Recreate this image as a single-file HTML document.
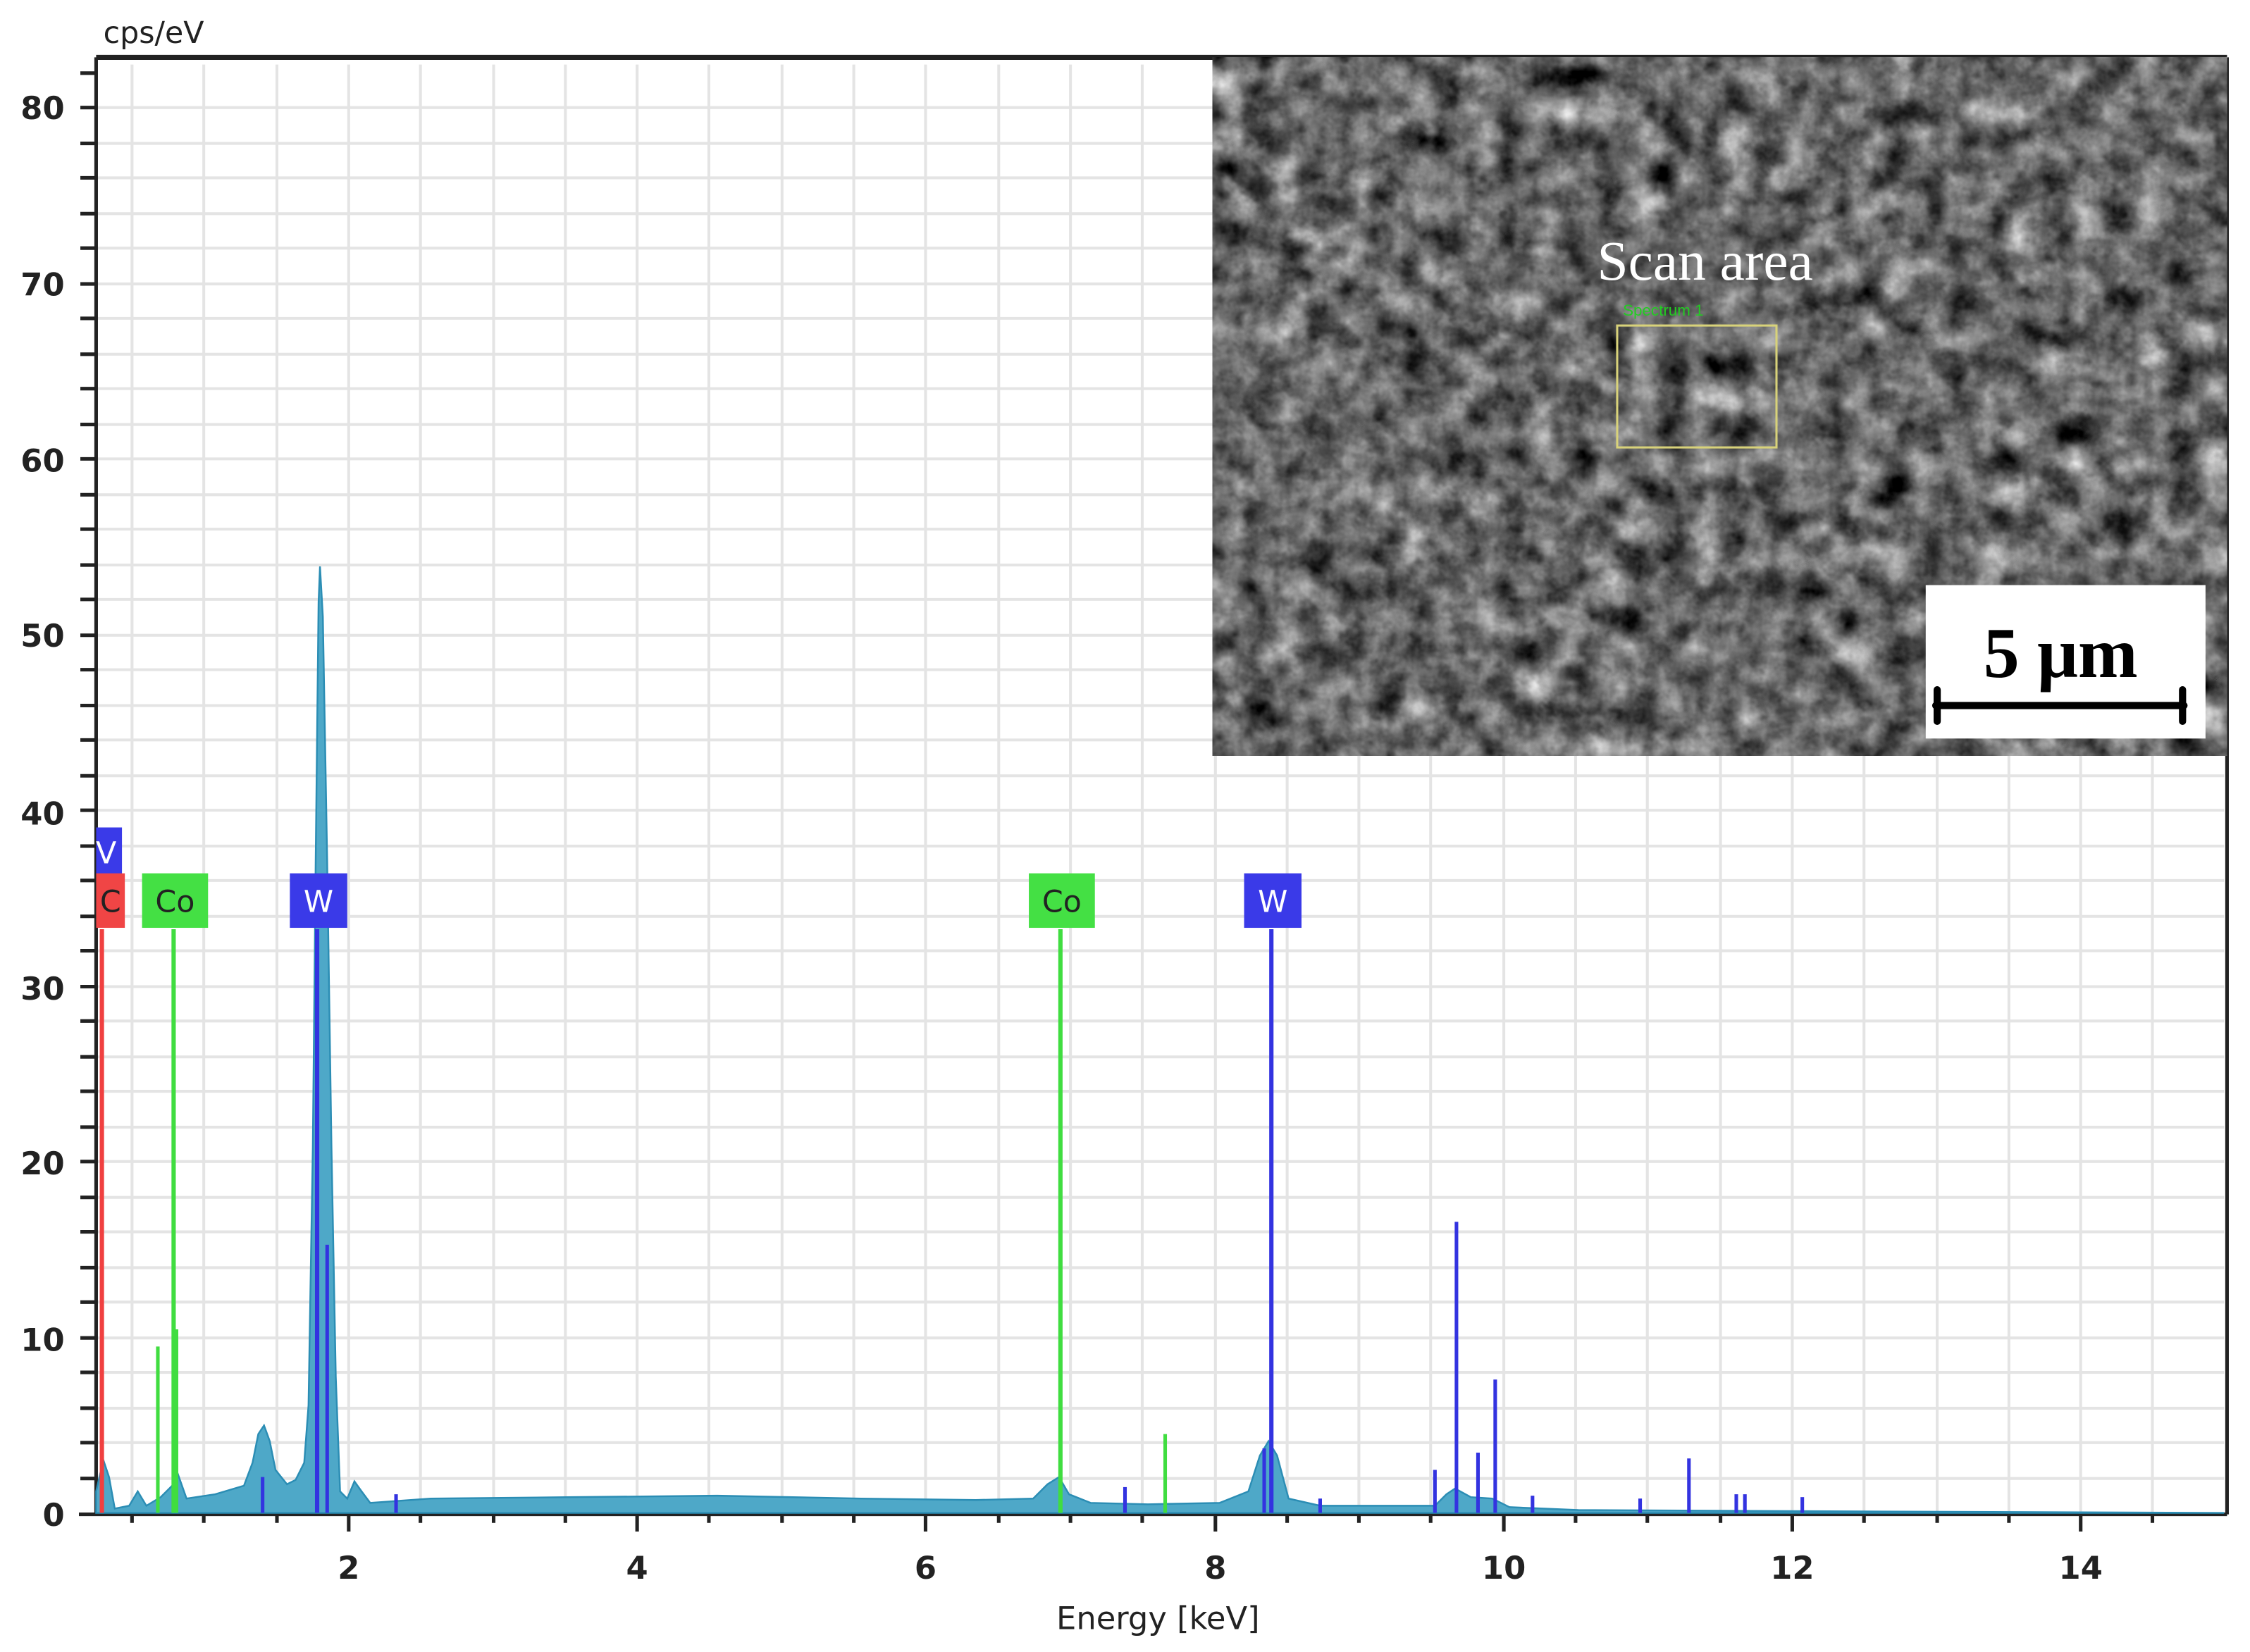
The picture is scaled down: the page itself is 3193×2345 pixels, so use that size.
<!DOCTYPE html>
<html><head><meta charset="utf-8"><style>
html,body{margin:0;padding:0;background:#fff;}
svg{display:block;}
</style></head><body>
<svg width="3193" height="2345" viewBox="0 0 1568 1152" preserveAspectRatio="none" xmlns="http://www.w3.org/2000/svg">
<defs>
<filter id="sem" x="0" y="0" width="100%" height="100%" color-interpolation-filters="sRGB">
<feTurbulence type="fractalNoise" baseFrequency="0.045" numOctaves="4" seed="3" result="n"/>
<feColorMatrix type="matrix" values="0.33 0.33 0.33 0 0  0.33 0.33 0.33 0 0  0.33 0.33 0.33 0 0  0 0 0 0 1" in="n" result="g"/>
<feComponentTransfer in="g"><feFuncR type="linear" slope="1.7" intercept="-0.44"/><feFuncG type="linear" slope="1.7" intercept="-0.44"/><feFuncB type="linear" slope="1.7" intercept="-0.44"/></feComponentTransfer>
</filter>
</defs>
<rect width="1568" height="1152" fill="#fff"/>
<!-- grid -->
<g stroke="#e4e4e4" stroke-width="2">
<line x1="67" y1="75" x2="1550" y2="75"/><line x1="67" y1="100" x2="1550" y2="100"/><line x1="67" y1="124" x2="1550" y2="124"/><line x1="67" y1="149" x2="1550" y2="149"/><line x1="67" y1="173" x2="1550" y2="173"/><line x1="67" y1="198" x2="1550" y2="198"/><line x1="67" y1="222" x2="1550" y2="222"/><line x1="67" y1="247" x2="1550" y2="247"/><line x1="67" y1="271" x2="1550" y2="271"/><line x1="67" y1="296" x2="1550" y2="296"/><line x1="67" y1="320" x2="1550" y2="320"/><line x1="67" y1="345" x2="1550" y2="345"/><line x1="67" y1="369" x2="1550" y2="369"/><line x1="67" y1="394" x2="1550" y2="394"/><line x1="67" y1="418" x2="1550" y2="418"/><line x1="67" y1="443" x2="1550" y2="443"/><line x1="67" y1="467" x2="1550" y2="467"/><line x1="67" y1="492" x2="1550" y2="492"/><line x1="67" y1="516" x2="1550" y2="516"/><line x1="67" y1="541" x2="1550" y2="541"/><line x1="67" y1="565" x2="1550" y2="565"/><line x1="67" y1="590" x2="1550" y2="590"/><line x1="67" y1="614" x2="1550" y2="614"/><line x1="67" y1="639" x2="1550" y2="639"/><line x1="67" y1="663" x2="1550" y2="663"/><line x1="67" y1="688" x2="1550" y2="688"/><line x1="67" y1="712" x2="1550" y2="712"/><line x1="67" y1="737" x2="1550" y2="737"/><line x1="67" y1="761" x2="1550" y2="761"/><line x1="67" y1="786" x2="1550" y2="786"/><line x1="67" y1="810" x2="1550" y2="810"/><line x1="67" y1="835" x2="1550" y2="835"/><line x1="67" y1="859" x2="1550" y2="859"/><line x1="67" y1="884" x2="1550" y2="884"/><line x1="67" y1="908" x2="1550" y2="908"/><line x1="67" y1="933" x2="1550" y2="933"/><line x1="67" y1="957" x2="1550" y2="957"/><line x1="67" y1="982" x2="1550" y2="982"/><line x1="67" y1="1006" x2="1550" y2="1006"/><line x1="67" y1="1031" x2="1550" y2="1031"/>
<line x1="92" y1="45" x2="92" y2="1055"/><line x1="142" y1="45" x2="142" y2="1055"/><line x1="193" y1="45" x2="193" y2="1055"/><line x1="243" y1="45" x2="243" y2="1055"/><line x1="293" y1="45" x2="293" y2="1055"/><line x1="344" y1="45" x2="344" y2="1055"/><line x1="394" y1="45" x2="394" y2="1055"/><line x1="444" y1="45" x2="444" y2="1055"/><line x1="494" y1="45" x2="494" y2="1055"/><line x1="545" y1="45" x2="545" y2="1055"/><line x1="595" y1="45" x2="595" y2="1055"/><line x1="645" y1="45" x2="645" y2="1055"/><line x1="696" y1="45" x2="696" y2="1055"/><line x1="746" y1="45" x2="746" y2="1055"/><line x1="796" y1="45" x2="796" y2="1055"/><line x1="847" y1="45" x2="847" y2="1055"/><line x1="897" y1="45" x2="897" y2="1055"/><line x1="947" y1="45" x2="947" y2="1055"/><line x1="997" y1="45" x2="997" y2="1055"/><line x1="1048" y1="45" x2="1048" y2="1055"/><line x1="1098" y1="45" x2="1098" y2="1055"/><line x1="1148" y1="45" x2="1148" y2="1055"/><line x1="1199" y1="45" x2="1199" y2="1055"/><line x1="1249" y1="45" x2="1249" y2="1055"/><line x1="1299" y1="45" x2="1299" y2="1055"/><line x1="1350" y1="45" x2="1350" y2="1055"/><line x1="1400" y1="45" x2="1400" y2="1055"/><line x1="1450" y1="45" x2="1450" y2="1055"/><line x1="1500" y1="45" x2="1500" y2="1055"/>
</g>
<!-- axes -->
<g stroke="#222" stroke-width="2.5">
<line x1="67" y1="40" x2="1552" y2="40" stroke-width="3.5"/>
<line x1="67" y1="40" x2="67" y2="1056"/>
<line x1="1552" y1="40" x2="1552" y2="1056"/>
<line x1="55" y1="1056" x2="1552" y2="1056"/>
</g>
<g stroke="#222" stroke-width="2.5">
<path d="M56 51h11M56 75h11M56 100h11M56 124h11M56 149h11M56 173h11M56 198h11M56 222h11M56 247h11M56 271h11M56 296h11M56 320h11M56 345h11M56 369h11M56 394h11M56 418h11M56 443h11M56 467h11M56 492h11M56 516h11M56 541h11M56 565h11M56 590h11M56 614h11M56 639h11M56 663h11M56 688h11M56 712h11M56 737h11M56 761h11M56 786h11M56 810h11M56 835h11M56 859h11M56 884h11M56 908h11M56 933h11M56 957h11M56 982h11M56 1006h11M56 1031h11"/>
<path d="M92 1056v6M142 1056v6M193 1056v6M243 1056v12M293 1056v6M344 1056v6M394 1056v6M444 1056v12M494 1056v6M545 1056v6M595 1056v6M645 1056v12M696 1056v6M746 1056v6M796 1056v6M847 1056v12M897 1056v6M947 1056v6M997 1056v6M1048 1056v12M1098 1056v6M1148 1056v6M1199 1056v6M1249 1056v12M1299 1056v6M1350 1056v6M1400 1056v6M1450 1056v12M1500 1056v6"/>
</g>
<g font-family="'DejaVu Sans','Liberation Sans',sans-serif" font-size="22" font-weight="bold" fill="#222" text-anchor="end">
<text x="45" y="83">80</text><text x="45" y="206">70</text><text x="45" y="329">60</text><text x="45" y="451">50</text><text x="45" y="575">40</text><text x="45" y="697">30</text><text x="45" y="819">20</text><text x="45" y="942">10</text><text x="45" y="1064">0</text>
</g>
<g font-family="'DejaVu Sans','Liberation Sans',sans-serif" font-size="22" font-weight="bold" fill="#222" text-anchor="middle">
<text x="243" y="1101">2</text><text x="444" y="1101">4</text><text x="645" y="1101">6</text><text x="847" y="1101">8</text><text x="1048" y="1101">10</text><text x="1249" y="1101">12</text><text x="1450" y="1101">14</text>
<text x="807" y="1136" font-weight="normal">Energy [keV]</text>
</g>
<text x="72" y="30" font-family="'DejaVu Sans','Liberation Sans',sans-serif" font-size="21" fill="#222">cps/eV</text>
<!-- SEM inset -->
<rect x="845" y="40" width="707" height="487" fill="#6a6a6a"/>
<rect x="845" y="40" width="707" height="487" filter="url(#sem)"/>
<text x="1113" y="195" font-family="'Liberation Serif',serif" font-size="39" fill="#fff">Scan area</text>
<text x="1131" y="220" font-family="'Liberation Sans',sans-serif" font-size="11" fill="#22cc22">Spectrum 1</text>
<rect x="1127" y="227" width="111" height="85" fill="none" stroke="#d8d27a" stroke-width="1.5"/>
<rect x="1342" y="408" width="195" height="107" fill="#fff"/>
<text x="1436" y="472" text-anchor="middle" font-family="'Liberation Serif',serif" font-weight="bold" font-size="50" fill="#000">5 μm</text>
<path d="M1349 492H1522M1350 481v22M1521 481v22" stroke="#000" stroke-width="5" stroke-linecap="round" fill="none"/>
<!-- spectrum -->
<path d="M67,1055 L67,1040 L72,1018 L76,1030 L80,1052 L90,1050 L96,1040 L102,1050 L112,1044 L120,1036 L124,1028 L130,1045 L150,1042 L170,1036 L176,1020 L180,1000 L184,994 L188,1005 L192,1025 L200,1035 L206,1032 L212,1020 L215,980 L218,800 L220,600 L222,420 L223,395 L225,430 L228,600 L231,800 L234,960 L237,1040 L242,1045 L247,1033 L252,1040 L258,1048 L300,1045 L400,1044 L500,1043 L600,1045 L680,1046 L720,1045 L730,1035 L738,1030 L745,1042 L760,1048 L800,1049 L850,1048 L870,1040 L878,1015 L884,1005 L890,1015 L898,1045 L920,1050 L1000,1050 L1008,1042 L1014,1038 L1025,1044 L1040,1045 L1052,1051 L1100,1053 L1300,1054 L1550,1055 Z" fill="#4ea8c8" stroke="#2b8db4" stroke-width="1.2"/>
<!-- markers -->
<g stroke-width="3">
<line x1="71" y1="648" x2="71" y2="1055" stroke="#f04040"/>
<line x1="121" y1="648" x2="121" y2="1055" stroke="#40dd40"/>
<line x1="221" y1="648" x2="221" y2="1055" stroke="#3333e0"/>
<line x1="739" y1="648" x2="739" y2="1055" stroke="#40dd40"/>
<line x1="886" y1="648" x2="886" y2="1055" stroke="#3333e0"/>
</g>
<g stroke-width="2.5">
<line x1="110" y1="939" x2="110" y2="1055" stroke="#40dd40"/>
<line x1="123" y1="927" x2="123" y2="1055" stroke="#40dd40"/>
<line x1="812" y1="1000" x2="812" y2="1055" stroke="#40dd40"/>
<g stroke="#3333e0">
<line x1="228" y1="868" x2="228" y2="1055"/><line x1="183" y1="1030" x2="183" y2="1055"/><line x1="276" y1="1042" x2="276" y2="1055"/><line x1="784" y1="1037" x2="784" y2="1055"/><line x1="881" y1="1010" x2="881" y2="1055"/><line x1="920" y1="1045" x2="920" y2="1055"/><line x1="1000" y1="1025" x2="1000" y2="1055"/><line x1="1015" y1="852" x2="1015" y2="1055"/><line x1="1030" y1="1013" x2="1030" y2="1055"/><line x1="1042" y1="962" x2="1042" y2="1055"/><line x1="1068" y1="1043" x2="1068" y2="1055"/><line x1="1143" y1="1045" x2="1143" y2="1055"/><line x1="1177" y1="1017" x2="1177" y2="1055"/><line x1="1210" y1="1042" x2="1210" y2="1055"/><line x1="1216" y1="1042" x2="1216" y2="1055"/><line x1="1256" y1="1044" x2="1256" y2="1055"/>
</g></g>
<!-- labels -->
<g font-family="'DejaVu Sans','Liberation Sans',sans-serif" font-size="21" text-anchor="middle">
<rect x="67" y="577" width="18" height="33" fill="#3a3ae8"/><text x="74" y="602" fill="#fff">V</text>
<rect x="67" y="609" width="20" height="38" fill="#f04545"/><text x="77" y="636" fill="#222">C</text>
<rect x="99" y="609" width="46" height="38" fill="#44e044"/><text x="122" y="636" fill="#222">Co</text>
<rect x="202" y="609" width="40" height="38" fill="#3a3ae8"/><text x="222" y="636" fill="#fff">W</text>
<rect x="717" y="609" width="46" height="38" fill="#44e044"/><text x="740" y="636" fill="#222">Co</text>
<rect x="867" y="609" width="40" height="38" fill="#3a3ae8"/><text x="887" y="636" fill="#fff">W</text>
</g>
</svg>
</body></html>
